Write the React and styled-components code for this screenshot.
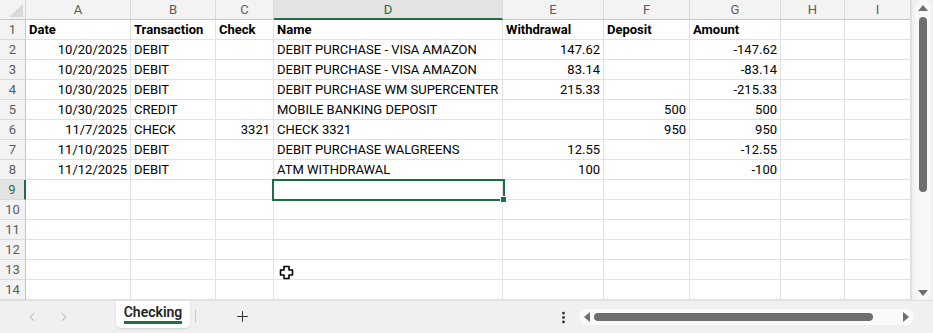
import styled, { createGlobalStyle } from 'styled-components';
import { ChevronLeft, ChevronRight, Plus, EllipsisVertical } from 'lucide-react';

const GlobalStyle = createGlobalStyle`
  body {
    margin: 0;
    font-family: Roboto, "Liberation Sans", Arial, sans-serif;
    background: #f0f0f0;
  }
`;

const COLS = [
  { key: 'A', w: 105 },
  { key: 'B', w: 85 },
  { key: 'C', w: 58 },
  { key: 'D', w: 229 },
  { key: 'E', w: 101 },
  { key: 'F', w: 86 },
  { key: 'G', w: 91 },
  { key: 'H', w: 64 },
  { key: 'I', w: 66 },
];

const NUMERIC = { A: true, C: true, E: true, F: true, G: true };

const ROWS = [
  ['Date', 'Transaction', 'Check', 'Name', 'Withdrawal', 'Deposit', 'Amount', '', ''],
  ['10/20/2025', 'DEBIT', '', 'DEBIT PURCHASE - VISA AMAZON', '147.62', '', '-147.62', '', ''],
  ['10/20/2025', 'DEBIT', '', 'DEBIT PURCHASE - VISA AMAZON', '83.14', '', '-83.14', '', ''],
  ['10/30/2025', 'DEBIT', '', 'DEBIT PURCHASE WM SUPERCENTER', '215.33', '', '-215.33', '', ''],
  ['10/30/2025', 'CREDIT', '', 'MOBILE BANKING DEPOSIT', '', '500', '500', '', ''],
  ['11/7/2025', 'CHECK', '3321', 'CHECK 3321', '', '950', '950', '', ''],
  ['11/10/2025', 'DEBIT', '', 'DEBIT PURCHASE WALGREENS', '12.55', '', '-12.55', '', ''],
  ['11/12/2025', 'DEBIT', '', 'ATM WITHDRAWAL', '100', '', '-100', '', ''],
];

const Frame = styled.div`
  width: 933px;
  height: 333px;
  display: flex;
  flex-direction: column;
  background: #f0f0f0;
  overflow: hidden;
`;

const Main = styled.div`
  display: flex;
  height: 300px;
`;

const Sheet = styled.div`
  position: relative;
  width: 911px;
  display: grid;
  grid-template-columns: 26px ${COLS.map((c) => `${c.w}px`).join(' ')};
  grid-template-rows: repeat(15, 20px);
  background: #fff;
`;

const Corner = styled.div`
  box-sizing: border-box;
  background: #f3f3f3;
  border-right: 1px solid #d6d6d6;
  border-bottom: 1px solid #c6c6c6;
  display: flex;
  align-items: flex-end;
  justify-content: flex-end;
  padding: 0 2px 2px 0;
`;

const ColHead = styled.div`
  box-sizing: border-box;
  background: ${(p) => (p.$active ? '#e3e3e3' : '#f3f3f3')};
  border-right: 1px solid #dadada;
  border-bottom: ${(p) => (p.$active ? '2px solid #1e6e42' : '1px solid #c6c6c6')};
  color: ${(p) => (p.$active ? '#1e6e42' : '#5c5c5c')};
  font-size: 13px;
  line-height: 19px;
  text-align: center;
`;

const RowHead = styled.div`
  box-sizing: border-box;
  background: ${(p) => (p.$active ? '#e3e3e3' : '#f3f3f3')};
  border-right: ${(p) => (p.$active ? '2px solid #1e6e42' : '1px solid #c6c6c6')};
  border-bottom: 1px solid #dadada;
  color: ${(p) => (p.$active ? '#1e6e42' : '#5c5c5c')};
  font-size: 13px;
  line-height: 19px;
  text-align: center;
`;

const Cell = styled.div`
  position: relative;
  box-sizing: border-box;
  border-right: 1px solid #e1e1e1;
  border-bottom: 1px solid #e1e1e1;
  padding: 0 3px;
  font-size: 13px;
  line-height: 20px;
  white-space: nowrap;
  color: #000;
  text-align: ${(p) => (p.$num ? 'right' : 'left')};
  font-weight: ${(p) => (p.$bold ? 700 : 400)};
`;

const Selection = styled.div`
  position: absolute;
  top: -1px;
  left: -2px;
  width: 233px;
  height: 22px;
  box-sizing: border-box;
  border: 2px solid #1e6e42;
  z-index: 2;

  &::after {
    content: '';
    position: absolute;
    right: -4px;
    bottom: -4px;
    width: 5px;
    height: 5px;
    background: #1e6e42;
    border: 1px solid #fff;
  }
`;

const Pointer = styled.svg`
  position: absolute;
  left: 279px;
  top: 265px;
  z-index: 3;
`;

const VScroll = styled.div`
  width: 22px;
  box-sizing: border-box;
  border-left: 1px solid #e1e1e1;
  padding: 0 2px 0 3px;
  background: #f0f0f0;
`;

const VTrack = styled.div`
  height: 100%;
  display: flex;
  flex-direction: column;
  align-items: center;
  background: #f8f8f8;
  border-radius: 8px;
`;

const Arrow = styled.svg`
  flex: none;
  margin: ${(p) => p.$m};
`;

const VThumb = styled.div`
  width: 8px;
  height: 175px;
  border-radius: 4px;
  background: #6e6e6e;
`;

const Spacer = styled.div`
  flex: 1;
`;

const EndGap = styled.div`
  flex: none;
  width: 19px;
`;

const Bottom = styled.div`
  height: 33px;
  display: flex;
  align-items: flex-start;
  border-top: 1px solid #e1e1e1;
  box-sizing: border-box;
`;

const Nav = styled.div`
  display: flex;
  gap: 18px;
  padding: 9px 0 0 25px;
  color: #a0a0a0;
  width: 116px;
  box-sizing: border-box;
`;

const Tab = styled.div`
  width: 74px;
  height: 27px;
  box-sizing: border-box;
  background: #fff;
  border-radius: 0 0 5px 5px;
  box-shadow: 0 1px 2px rgba(0, 0, 0, 0.12);
  display: flex;
  justify-content: center;
  padding-top: 3px;
`;

const TabLabel = styled.span`
  font-size: 14px;
  font-weight: 600;
  color: #242424;
  line-height: 17px;
  height: 17px;
  border-bottom: 3px solid #1e7145;
  box-sizing: content-box;
`;

const Divider = styled.div`
  width: 1px;
  height: 14px;
  margin: 8px 0 0 5px;
  background: #c8c8c8;
`;

const AddButton = styled.div`
  margin: 7px 0 0 38px;
  color: #333;
  display: flex;
`;

const Dots = styled.div`
  margin: 9px 8px 0 0;
  color: #333;
  display: flex;
`;

const HTrack = styled.div`
  width: 335px;
  height: 16px;
  margin-top: 8px;
  border-radius: 8px;
  background: #fafafa;
  display: flex;
  align-items: center;
  padding: 0 5px;
  box-sizing: border-box;
`;

const HThumb = styled.div`
  width: 279px;
  height: 8px;
  border-radius: 4px;
  background: #6e6e6e;
  margin: 0 auto 0 4px;
`;

const Tri = ({ dir, m }) => {
  const pts = {
    up: '0,6 5,0 10,6',
    down: '0,0 10,0 5,6',
    left: '6,0 6,10 0,5',
    right: '0,0 0,10 6,5',
  }[dir];
  const vertical = dir === 'up' || dir === 'down';
  return (
    <Arrow $m={m} width={vertical ? 10 : 6} height={vertical ? 6 : 10} viewBox={vertical ? '0 0 10 6' : '0 0 6 10'}>
      <polygon points={pts} fill="#6e6e6e" />
    </Arrow>
  );
};

export default function App() {
  return (
    <Frame>
      <GlobalStyle />
      <Main>
        <Sheet>
          <Corner>
            <svg width="14" height="13" viewBox="0 0 14 13">
              <polygon points="0,13 14,13 14,0" fill="#dadada" />
            </svg>
          </Corner>
          {COLS.map((c) => (
            <ColHead key={c.key} $active={c.key === 'D'}>
              {c.key}
            </ColHead>
          ))}
          {Array.from({ length: 14 }, (_, r) => {
            const data = ROWS[r] || [];
            return [
              <RowHead key={`h${r}`} $active={r === 8}>
                {r + 1}
              </RowHead>,
              ...COLS.map((c, ci) => (
                <Cell key={`${r}-${c.key}`} $num={r > 0 && NUMERIC[c.key]} $bold={r === 0}>
                  {data[ci] || ''}
                  {r === 8 && c.key === 'D' && <Selection />}
                </Cell>
              )),
            ];
          })}
          <Pointer width="15" height="15" viewBox="0 0 15 15">
            <path
              d="M5 1.5h5v3.5h3.5v5H10v3.5H5V10H1.5V5H5z"
              fill="#fff"
              stroke="#000"
              strokeWidth="1.6"
              strokeLinejoin="round"
            />
          </Pointer>
        </Sheet>
        <VScroll>
          <VTrack>
            <Tri dir="up" m="5px 0 6px" />
            <VThumb />
            <Spacer />
            <Tri dir="down" m="0 0 4px" />
          </VTrack>
        </VScroll>
      </Main>
      <Bottom>
        <Nav>
          <ChevronLeft size={14} strokeWidth={1.5} />
          <ChevronRight size={14} strokeWidth={1.5} />
        </Nav>
        <Tab>
          <TabLabel>Checking</TabLabel>
        </Tab>
        <Divider />
        <AddButton>
          <Plus size={17} strokeWidth={1.4} />
        </AddButton>
        <Spacer />
        <Dots>
          <EllipsisVertical size={15} strokeWidth={2.5} />
        </Dots>
        <HTrack>
          <Tri dir="left" />
          <HThumb />
          <Tri dir="right" />
        </HTrack>
        <EndGap />
      </Bottom>
    </Frame>
  );
}
